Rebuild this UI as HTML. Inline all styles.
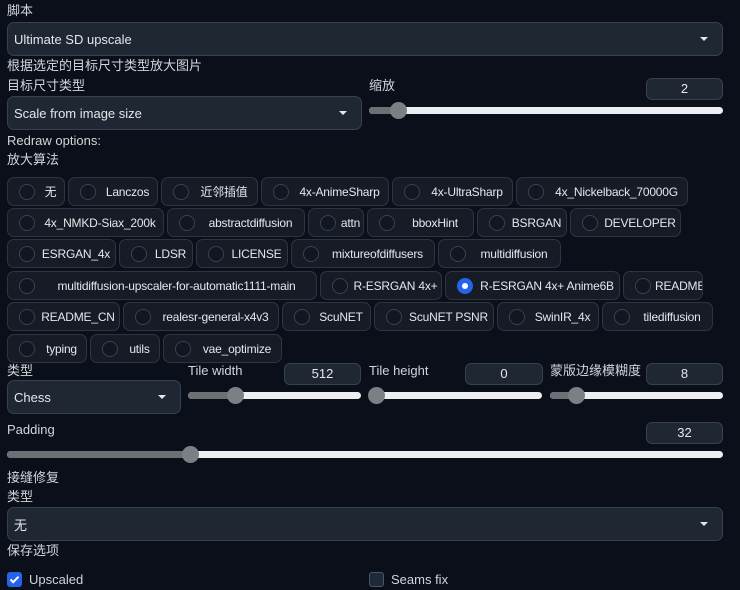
<!DOCTYPE html>
<html><head><meta charset="utf-8"><style>
*{box-sizing:border-box;margin:0;padding:0}
body{width:740px;height:588px;background:#0b0f19;color:#e5e7eb;font-family:"Liberation Sans","Noto Sans CJK SC",sans-serif;font-size:13px;position:relative;overflow:hidden}
.a{position:absolute}
.lbl{position:absolute;font-size:13px;color:#d1d5db;line-height:16px;white-space:nowrap}
.dd{position:absolute;background:#1f2733;border:1px solid #374151;border-radius:7px;padding-left:6px;display:flex;align-items:center;font-size:13px;color:#e5e7eb}
.dd .ar{position:absolute;right:14px;top:50%;margin-top:-2px;width:0;height:0;border-left:4px solid transparent;border-right:4px solid transparent;border-top:4px solid #e5e7eb}
.num{position:absolute;background:#1f2733;border:1px solid #374151;border-radius:6px;height:22px;text-align:center;line-height:20px;font-size:13px}
.sl{position:absolute;height:7px;border-radius:4px;background:#eceef1}
.sl .f{position:absolute;left:0;top:0;bottom:0;background:#6b7075;border-radius:4px}
.sl .t{position:absolute;top:-5px;width:17px;height:17px;border-radius:50%;background:#7c8085;margin-left:-8px}
.row{position:absolute;left:7px;display:flex;gap:3px;height:29px}
.c{height:29px;background:#161b25;border:1px solid #2e3542;border-radius:7px;display:flex;align-items:center;padding:0 0 0 11px;font-size:12px;letter-spacing:-0.2px;color:#e5e7eb;white-space:nowrap;overflow:hidden}
.c i{display:inline-block;width:16px;height:16px;border-radius:50%;border:1px solid #3a4150;background:#111620;flex:none}
.c span{flex:1;text-align:center;padding:0 2px 0 4px}
.c i.on{background:#2563eb;border-color:#2563eb;position:relative}
.c i.on:after{content:"";position:absolute;left:4px;top:4px;width:6px;height:6px;border-radius:50%;background:#fff}
</style></head><body>
<div class="lbl" style="left:7px;top:3px">脚本</div>
<div class="dd" style="left:7px;top:22px;width:716px;height:34px">Ultimate SD upscale<div class="ar"></div></div>
<div class="lbl" style="left:7px;top:58px">根据选定的目标尺寸类型放大图片</div>
<div class="lbl" style="left:7px;top:78px">目标尺寸类型</div>
<div class="dd" style="left:7px;top:96px;width:355px;height:34px">Scale from image size<div class="ar"></div></div>
<div class="lbl" style="left:369px;top:78px">缩放</div>
<div class="num" style="left:646px;top:78px;width:77px">2</div>
<div class="sl" style="left:369px;top:107px;width:354px"><div class="f" style="width:29px"></div><div class="t" style="left:29px"></div></div>
<div class="lbl" style="left:7px;top:133px">Redraw options:</div>
<div class="lbl" style="left:7px;top:152px">放大算法</div>

<div class="row" style="top:177px">
<div class="c" style="width:58px"><i></i><span>无</span></div>
<div class="c" style="width:90px"><i></i><span>Lanczos</span></div>
<div class="c" style="width:97px"><i></i><span>近邻插值</span></div>
<div class="c" style="width:128px"><i></i><span>4x-AnimeSharp</span></div>
<div class="c" style="width:121px"><i></i><span>4x-UltraSharp</span></div>
<div class="c" style="width:172px"><i></i><span>4x_Nickelback_70000G</span></div>
</div>
<div class="row" style="top:208px">
<div class="c" style="width:157px"><i></i><span>4x_NMKD-Siax_200k</span></div>
<div class="c" style="width:138px"><i></i><span>abstractdiffusion</span></div>
<div class="c" style="width:56px"><i></i><span>attn</span></div>
<div class="c" style="width:107px"><i></i><span>bboxHint</span></div>
<div class="c" style="width:90px"><i></i><span>BSRGAN</span></div>
<div class="c" style="width:111px"><i></i><span>DEVELOPER</span></div>
</div>
<div class="row" style="top:239px">
<div class="c" style="width:109px"><i></i><span>ESRGAN_4x</span></div>
<div class="c" style="width:74px"><i></i><span>LDSR</span></div>
<div class="c" style="width:92px"><i></i><span>LICENSE</span></div>
<div class="c" style="width:144px"><i></i><span>mixtureofdiffusers</span></div>
<div class="c" style="width:123px"><i></i><span>multidiffusion</span></div>
</div>
<div class="row" style="top:271px">
<div class="c" style="width:310px"><i></i><span>multidiffusion-upscaler-for-automatic1111-main</span></div>
<div class="c" style="width:122px"><i></i><span>R-ESRGAN 4x+</span></div>
<div class="c" style="width:175px"><i class="on"></i><span>R-ESRGAN 4x+ Anime6B</span></div>
<div class="c" style="width:80px"><i></i><span>README</span></div>
</div>
<div class="row" style="top:302px">
<div class="c" style="width:113px"><i></i><span>README_CN</span></div>
<div class="c" style="width:156px"><i></i><span>realesr-general-x4v3</span></div>
<div class="c" style="width:89px"><i></i><span>ScuNET</span></div>
<div class="c" style="width:120px"><i></i><span>ScuNET PSNR</span></div>
<div class="c" style="width:102px"><i></i><span>SwinIR_4x</span></div>
<div class="c" style="width:111px"><i></i><span>tilediffusion</span></div>
</div>
<div class="row" style="top:334px">
<div class="c" style="width:80px"><i></i><span>typing</span></div>
<div class="c" style="width:70px"><i></i><span>utils</span></div>
<div class="c" style="width:119px"><i></i><span>vae_optimize</span></div>
</div>

<div class="lbl" style="left:7px;top:363px">类型</div>
<div class="dd" style="left:7px;top:380px;width:174px;height:34px">Chess<div class="ar"></div></div>
<div class="lbl" style="left:188px;top:363px">Tile width</div>
<div class="num" style="left:284px;top:363px;width:77px">512</div>
<div class="sl" style="left:188px;top:392px;width:173px"><div class="f" style="width:47px"></div><div class="t" style="left:47px"></div></div>
<div class="lbl" style="left:369px;top:363px">Tile height</div>
<div class="num" style="left:465px;top:363px;width:78px">0</div>
<div class="sl" style="left:369px;top:392px;width:173px"><div class="f" style="width:7px"></div><div class="t" style="left:7px"></div></div>
<div class="lbl" style="left:550px;top:363px">蒙版边缘模糊度</div>
<div class="num" style="left:646px;top:363px;width:77px">8</div>
<div class="sl" style="left:550px;top:392px;width:173px"><div class="f" style="width:26px"></div><div class="t" style="left:26px"></div></div>

<div class="lbl" style="left:7px;top:422px">Padding</div>
<div class="num" style="left:646px;top:422px;width:77px">32</div>
<div class="sl" style="left:7px;top:451px;width:716px"><div class="f" style="width:183px"></div><div class="t" style="left:183px"></div></div>

<div class="lbl" style="left:7px;top:470px">接缝修复</div>
<div class="lbl" style="left:7px;top:489px">类型</div>
<div class="dd" style="left:7px;top:507px;width:716px;height:34px">无<div class="ar"></div></div>
<div class="lbl" style="left:7px;top:543px">保存选项</div>
<div class="a" style="left:7px;top:572px;width:15px;height:15px;background:#2563eb;border-radius:3px"><svg width="15" height="15" viewBox="0 0 15 15"><path d="M3.5 7.5l2.7 2.7 5.3-5.5" stroke="#fff" stroke-width="2" fill="none"/></svg></div>
<div class="lbl" style="left:29px;top:572px">Upscaled</div>
<div class="a" style="left:369px;top:572px;width:15px;height:15px;background:#1f2937;border:1px solid #4b5563;border-radius:3px"></div>
<div class="lbl" style="left:391px;top:572px">Seams fix</div>
</body></html>
